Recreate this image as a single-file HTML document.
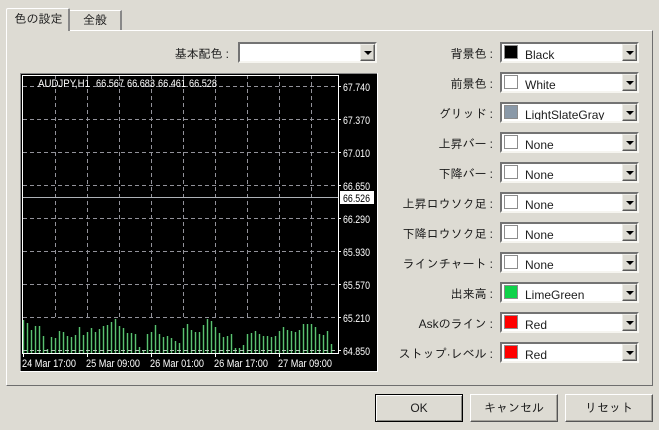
<!DOCTYPE html>
<html><head><meta charset="utf-8"><style>
html,body{margin:0;padding:0}
body{width:659px;height:430px;overflow:hidden;background:#dddbd3;position:relative;font-family:"Liberation Sans","IPAGothic","Noto Sans CJK JP",sans-serif;font-size:12px;color:#1c1c1c}
.a{position:absolute;box-sizing:border-box}
.lab{position:absolute;right:166px;height:24px;line-height:24px;white-space:nowrap;font-family:"Liberation Sans","IPAGothic",sans-serif;font-size:12px}
.lab i{font-style:normal;margin-left:3px}
.cb{position:absolute;left:500px;width:139px;height:21px;box-sizing:border-box;border:2px solid;border-color:#737373 #f6f5f0 #f6f5f0 #737373;background:#fff}
.cb .sw{position:absolute;left:2px;top:1px;width:14px;height:14px;box-sizing:border-box;border:1px solid #8c8c8c}
.cb .t{position:absolute;left:23px;top:0;width:98px;height:16px;overflow:hidden;line-height:22px;white-space:nowrap;font-size:12px}
.dd{position:absolute;right:0;top:0;width:15px;height:17px;box-sizing:border-box;background:#dddbd3;border:1px solid;border-color:#eeede8 #5a5a5a #5a5a5a #eeede8;box-shadow:inset -1px -1px 0 #9a9a94}
.dd:after{content:"";position:absolute;left:3px;top:6px;border:4px solid transparent;border-top:4px solid #000;border-bottom:0}
.btn{position:absolute;top:394px;height:28px;box-sizing:border-box;border:1px solid;border-color:#fff #555 #555 #fff;text-align:center;line-height:26px;font-family:"Liberation Sans","IPAGothic",sans-serif;font-size:12px;box-shadow:inset -1px -1px 0 #a5a39c}
</style></head><body>
<div class="a" style="left:6px;top:30px;width:647px;height:356px;border:1px solid;border-color:#fff #6e6e6e #6e6e6e #fff"></div>
<div class="a" style="left:6px;top:8px;width:64px;height:23px;background:#dddbd3;border:1px solid #fff;border-bottom:0;border-right:2px solid #888;border-radius:2px 2px 0 0;text-align:center;line-height:21px;padding-left:2px;font-family:'IPAGothic',sans-serif">色の設定</div>
<div class="a" style="left:70px;top:10px;width:52px;height:20px;border-top:1px solid #fff;border-right:2px solid #888;text-align:center;line-height:19px;font-family:'IPAGothic',sans-serif">全般</div>

<div class="lab" style="top:42px;right:430px">基本配色<i>:</i></div>
<div class="cb" style="left:238px;top:42px"><div class="dd"></div></div>

<svg class="a" style="left:20px;top:73px" width="358" height="299" viewBox="20 73 358 299" xmlns="http://www.w3.org/2000/svg" font-family="Liberation Sans, sans-serif">
<defs><path id="bars" fill="none" d="M23.5 320V353M27.5 323V353M31.5 330V353M35.5 326V353M39.5 326V353M43.5 336V353M47.5 349V353M51.5 337V353M55.5 338V353M59.5 331V353M63.5 332V353M67.5 336V353M71.5 337V353M75.5 335V353M79.5 327V353M83.5 335V353M87.5 332V353M91.5 328V353M95.5 332V353M99.5 329V353M103.5 326V353M107.5 325V353M111.5 322V353M115.5 319V353M119.5 326V353M123.5 328V353M127.5 333V353M131.5 333V353M135.5 334V353M139.5 347V353M143.5 350V353M147.5 334V353M151.5 332V353M155.5 325V353M159.5 334V353M163.5 337V353M167.5 336V353M171.5 338V353M175.5 341V353M179.5 343V353M183.5 328V353M187.5 324V353M191.5 330V353M195.5 332V353M199.5 332V353M203.5 325V353M207.5 319V353M211.5 321V353M215.5 327V353M219.5 333V353M223.5 337V353M227.5 336V353M231.5 334V353M235.5 348V353M239.5 348V353M243.5 345V353M247.5 334V353M251.5 333V353M255.5 331V353M259.5 334V353M263.5 336V353M267.5 336V353M271.5 337V353M275.5 336V353M279.5 331V353M283.5 327V353M287.5 330V353M291.5 331V353M295.5 332V353M299.5 330V353M303.5 324V353M307.5 324V353M311.5 324V353M315.5 327V353M319.5 334V353M323.5 335V353M327.5 331V353M331.5 344V353"/></defs>
<rect x="20" y="73" width="358" height="299" fill="#fff"/>
<path d="M20 73.5H377M20.5 73V371" stroke="#8a8a8a"/>
<rect x="21" y="74" width="356" height="297" fill="#000"/>
<use href="#bars" stroke="#1c5a2a" stroke-width="2"/>
<use href="#bars" stroke="#5cc072" stroke-width="1"/>
<path stroke="#92929a" stroke-dasharray="4 3" fill="none" d="M23 86.5H338M23 119.5H338M23 152.5H338M23 185.5H338M23 218.5H338M23 251.5H338M23 284.5H338M23 317.5H338M55.5 75V320M87.5 75V320M119.5 75V320M151.5 75V320M183.5 75V320M215.5 75V320M247.5 75V320M279.5 75V320M311.5 75V320"/>
<path stroke="#b4c8b8" stroke-dasharray="4 3" fill="none" d="M23 350.5H338"/>
<path stroke="#aeb2b8" fill="none" d="M23 197.5H338"/>
<path stroke="#fff" fill="none" d="M22.5 75V354M22 75.5H339M338.5 75V354M22 353.5H339M338 86.5h3M338 119.5h3M338 152.5h3M338 185.5h3M338 218.5h3M338 251.5h3M338 284.5h3M338 317.5h3M338 350.5h3M23.5 354v3M87.5 354v3M151.5 354v3M215.5 354v3M279.5 354v3"/>
<g fill="#fff" font-size="11">
<text x="38" y="87" textLength="52" lengthAdjust="spacingAndGlyphs">AUDJPY,H1</text>
<text x="96" y="87" textLength="28" lengthAdjust="spacingAndGlyphs">66.567</text>
<text x="127" y="87" textLength="28" lengthAdjust="spacingAndGlyphs">66.683</text>
<text x="158" y="87" textLength="28" lengthAdjust="spacingAndGlyphs">66.461</text>
<text x="189" y="87" textLength="28" lengthAdjust="spacingAndGlyphs">66.528</text>
<text x="343" y="91" textLength="27" lengthAdjust="spacingAndGlyphs">67.740</text>
<text x="343" y="124" textLength="27" lengthAdjust="spacingAndGlyphs">67.370</text>
<text x="343" y="157" textLength="27" lengthAdjust="spacingAndGlyphs">67.010</text>
<text x="343" y="190" textLength="27" lengthAdjust="spacingAndGlyphs">66.650</text>
<text x="343" y="223" textLength="27" lengthAdjust="spacingAndGlyphs">66.290</text>
<text x="343" y="256" textLength="27" lengthAdjust="spacingAndGlyphs">65.930</text>
<text x="343" y="289" textLength="27" lengthAdjust="spacingAndGlyphs">65.570</text>
<text x="343" y="322" textLength="27" lengthAdjust="spacingAndGlyphs">65.210</text>
<text x="343" y="355" textLength="27" lengthAdjust="spacingAndGlyphs">64.850</text>
<text x="22" y="367" textLength="54" lengthAdjust="spacingAndGlyphs">24 Mar 17:00</text>
<text x="86" y="367" textLength="54" lengthAdjust="spacingAndGlyphs">25 Mar 09:00</text>
<text x="150" y="367" textLength="54" lengthAdjust="spacingAndGlyphs">26 Mar 01:00</text>
<text x="214" y="367" textLength="54" lengthAdjust="spacingAndGlyphs">26 Mar 17:00</text>
<text x="278" y="367" textLength="54" lengthAdjust="spacingAndGlyphs">27 Mar 09:00</text>
</g>
<rect x="340" y="191" width="34" height="13" fill="#fff"/>
<text x="343" y="202" font-size="11" fill="#000" textLength="27" lengthAdjust="spacingAndGlyphs">66.526</text>
</svg>

<div class="lab" style="top:42px">背景色<i>:</i></div>
<div class="cb" style="top:42px"><div class="sw" style="background:#000"></div><div class="t">Black</div><div class="dd"></div></div>
<div class="lab" style="top:72px">前景色<i>:</i></div>
<div class="cb" style="top:72px"><div class="sw" style="background:#fff"></div><div class="t">White</div><div class="dd"></div></div>
<div class="lab" style="top:102px">グリッド<i>:</i></div>
<div class="cb" style="top:102px"><div class="sw" style="background:#8a99a8"></div><div class="t">LightSlateGray</div><div class="dd"></div></div>
<div class="lab" style="top:132px">上昇バー<i>:</i></div>
<div class="cb" style="top:132px"><div class="sw" style="background:#fff"></div><div class="t">None</div><div class="dd"></div></div>
<div class="lab" style="top:162px">下降バー<i>:</i></div>
<div class="cb" style="top:162px"><div class="sw" style="background:#fff"></div><div class="t">None</div><div class="dd"></div></div>
<div class="lab" style="top:192px">上昇ロウソク足<i>:</i></div>
<div class="cb" style="top:192px"><div class="sw" style="background:#fff"></div><div class="t">None</div><div class="dd"></div></div>
<div class="lab" style="top:222px">下降ロウソク足<i>:</i></div>
<div class="cb" style="top:222px"><div class="sw" style="background:#fff"></div><div class="t">None</div><div class="dd"></div></div>
<div class="lab" style="top:252px">ラインチャート<i>:</i></div>
<div class="cb" style="top:252px"><div class="sw" style="background:#fff"></div><div class="t">None</div><div class="dd"></div></div>
<div class="lab" style="top:282px">出来高<i>:</i></div>
<div class="cb" style="top:282px"><div class="sw" style="background:#0fd24a"></div><div class="t">LimeGreen</div><div class="dd"></div></div>
<div class="lab" style="top:312px">Askのライン<i>:</i></div>
<div class="cb" style="top:312px"><div class="sw" style="background:#f00"></div><div class="t">Red</div><div class="dd"></div></div>
<div class="lab" style="top:342px">ストップ·レベル<i>:</i></div>
<div class="cb" style="top:342px"><div class="sw" style="background:#f00"></div><div class="t">Red</div><div class="dd"></div></div>

<div class="btn" style="left:375px;width:88px;border:1px solid #000;box-shadow:inset 1px 1px 0 #fff,inset -1px -1px 0 #8a8a84">OK</div>
<div class="btn" style="left:470px;width:88px">キャンセル</div>
<div class="btn" style="left:565px;width:88px">リセット</div>
</body></html>
